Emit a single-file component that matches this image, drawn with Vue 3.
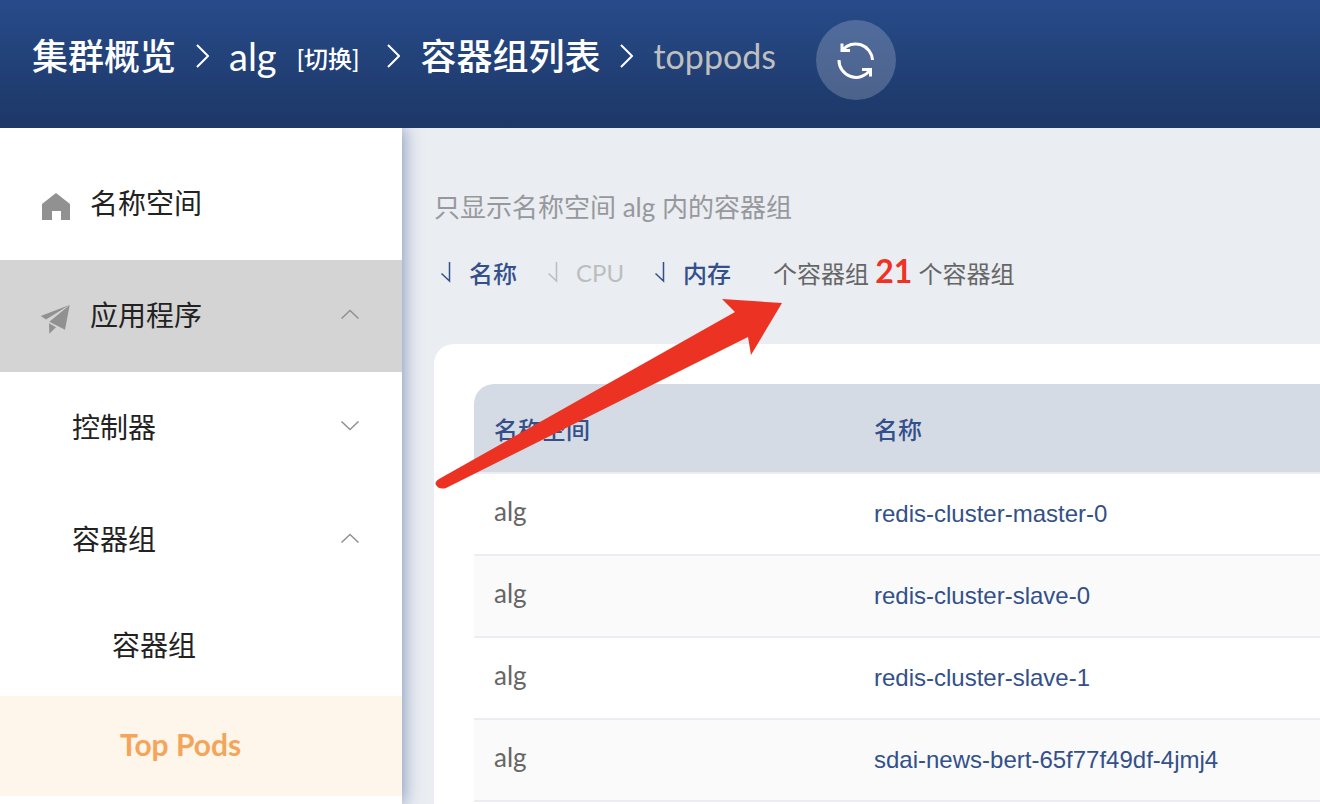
<script setup>
const crumbs = [
  { text: '集群概览', kind: 'link' },
  { text: 'alg', kind: 'namespace', action: '[切换]' },
  { text: '容器组列表', kind: 'link' },
  { text: 'toppods', kind: 'current' }
]

const menu = [
  { text: '名称空间', level: 'root', icon: 'home' },
  { text: '应用程序', level: 'root', icon: 'plane', arrow: 'up', open: true },
  { text: '控制器', level: 'group', arrow: 'down' },
  { text: '容器组', level: 'group', arrow: 'up' },
  { text: '容器组', level: 'leaf' },
  { text: 'Top Pods', level: 'leaf', selected: true }
]

const icons = {
  home: 'M16 11L30 22V38H21V29H12V38H2V22Z',
  plane: 'M29.5 11L.7 22L6 25.5ZM29.7 11L9.3 27.7L25 35.7ZM9 29.3L16 33.3L9.3 39.7Z'
}

const sorts = [
  { text: '名称', active: true },
  { text: 'CPU', active: false },
  { text: '内存', active: true }
]

const pods = [
  { namespace: 'alg', name: 'redis-cluster-master-0' },
  { namespace: 'alg', name: 'redis-cluster-slave-0' },
  { namespace: 'alg', name: 'redis-cluster-slave-1' },
  { namespace: 'alg', name: 'sdai-news-bert-65f77f49df-4jmj4' }
]
</script>

<template>
  <div class="page">
    <header class="topbar">
      <nav class="crumbs">
        <template v-for="(c, i) in crumbs" :key="c.text">
          <svg v-if="i" class="sep" width="13" height="24" viewBox="0 0 13 24" aria-hidden="true">
            <path d="M1 1L12 12L1 23" />
          </svg>
          <span v-if="c.kind === 'current'" class="current">{{ c.text }}</span>
          <a v-else href="#" :class="c.kind">{{ c.text }}</a>
          <button v-if="c.action" type="button" class="switch">{{ c.action }}</button>
        </template>
      </nav>
      <button type="button" class="refresh" aria-label="刷新">
        <svg width="40" height="40" viewBox="0 0 40 40" aria-hidden="true">
          <path d="M6 3.500V10.500H14M6.500 10A17 17 0 0 1 36.500 20" />
          <path d="M34.500 36.500V29.500H26M34 30A17 17 0 0 1 3 20" />
        </svg>
      </button>
    </header>

    <div class="body">
      <aside class="sidebar">
        <a
          v-for="(m, i) in menu"
          :key="i"
          href="#"
          class="item"
          :class="[m.level, { open: m.open, selected: m.selected }]"
        >
          <svg v-if="m.icon" class="icon" width="32" height="40" viewBox="0 0 32 40" aria-hidden="true">
            <path :d="icons[m.icon]" />
          </svg>
          <span class="label">{{ m.text }}</span>
          <svg v-if="m.arrow" class="caret" width="20" height="10" viewBox="0 0 20 10" aria-hidden="true">
            <path :d="m.arrow === 'up' ? 'M1.500 9.500L10 1.500L18.500 9.500' : 'M1.500 .5L10 8.500L18.500 .5'" />
          </svg>
        </a>
      </aside>

      <main class="main">
        <p class="hint">只显示名称空间 alg 内的容器组</p>
        <div class="toolbar">
          <button v-for="s in sorts" :key="s.text" type="button" class="sort" :class="{ active: s.active }">
            <svg width="12" height="24" viewBox="0 0 12 24" aria-hidden="true">
              <path d="M9.500 2V21L1.500 13.500" />
            </svg>
            {{ s.text }}
          </button>
          <p class="count">个容器组 <strong>21</strong> 个容器组</p>
        </div>

        <section class="card">
          <table class="pods">
            <thead>
              <tr>
                <th scope="col" class="ns">名称空间</th>
                <th scope="col">名称</th>
              </tr>
            </thead>
            <tbody>
              <tr v-for="p in pods" :key="p.name">
                <td class="ns">{{ p.namespace }}</td>
                <td class="name"><a href="#">{{ p.name }}</a></td>
              </tr>
            </tbody>
          </table>
        </section>

        <svg class="pointer" width="348" height="192" viewBox="0 0 348 192" aria-hidden="true">
          <path d="M348 5L288 1L301 14L5 181Q0 184 2 187Q5 192 12 190L314 39L317 57Z" />
        </svg>
      </main>
    </div>
  </div>
</template>

<style>
body {
  margin: 0;
}
</style>

<style scoped>
.page {
  display: flex;
  flex-direction: column;
  height: 100vh;
  overflow: hidden;
  font-family: Lato, "Noto Sans CJK SC", sans-serif;
  color: #222;
}

a {
  color: inherit;
  text-decoration: none;
}

button {
  padding: 0;
  border: 0;
  background: none;
  font: inherit;
  color: inherit;
  cursor: pointer;
}

p {
  margin: 0;
}

.topbar {
  position: relative;
  z-index: 2;
  display: flex;
  flex-shrink: 0;
  align-items: flex-start;
  gap: 40px;
  box-sizing: border-box;
  height: 128px;
  padding: 20px 32px;
  background: linear-gradient(#274b8a, #1d3766);
  color: #fff;
}

.crumbs {
  display: flex;
  align-items: center;
  gap: 20px;
  height: 72px;
  font-size: 36px;
  line-height: 72px;
}

.link {
  font-weight: 500;
}

.namespace {
  font-size: 38px;
}

.current {
  color: #bfbfbf;
  font-size: 34px;
}

.switch {
  margin-right: 8px;
  padding-top: 6px;
  font-size: 24px;
  font-weight: 500;
}

.sep {
  fill: none;
  stroke: #fff;
  stroke-width: 2;
}

.refresh {
  display: flex;
  align-items: center;
  justify-content: center;
  width: 80px;
  height: 80px;
  border-radius: 50%;
  background: rgba(255, 255, 255, 0.2);
}

.refresh svg {
  fill: none;
  stroke: #fff;
  stroke-width: 3;
}

.body {
  display: flex;
  flex: 1;
  min-height: 0;
}

.sidebar {
  position: relative;
  z-index: 1;
  flex: 0 0 402px;
  box-sizing: border-box;
  padding-top: 20px;
  background: #fff;
  box-shadow: 2px 0 16px rgba(38, 72, 135, 0.5);
}

.item {
  display: flex;
  align-items: center;
  box-sizing: border-box;
  height: 112px;
  padding: 0 42px 4px 72px;
  font-size: 28px;
}

.root {
  gap: 18px;
  padding-left: 40px;
}

.leaf {
  height: 100px;
  padding-left: 112px;
}

.open {
  background: #d4d4d4;
}

.selected {
  padding-left: 120px;
  background: #fef5eb;
  color: #f5a55a;
  font-size: 30px;
  font-weight: 700;
}

.icon {
  fill: #919191;
}

.caret {
  margin-left: auto;
  fill: none;
  stroke: #919191;
  stroke-width: 1.5;
}

.main {
  position: relative;
  display: flex;
  flex: 1;
  flex-direction: column;
  min-width: 0;
  padding: 59px 0 0 32px;
  background: #eaedf2;
}

.hint {
  color: #97989b;
  font-size: 26px;
  line-height: 40px;
}

.toolbar {
  display: flex;
  align-items: center;
  gap: 30px;
  height: 48px;
  margin: 21px 0 48px;
  padding-left: 6px;
  font-size: 24px;
}

.sort {
  display: flex;
  align-items: center;
  gap: 17px;
  color: #bdbdbd;
}

.sort svg {
  fill: none;
  stroke: currentColor;
  stroke-width: 1.5;
}

.sort.active {
  color: #33508a;
  font-weight: 500;
}

.count {
  margin-left: 12px;
  padding-bottom: 4px;
  color: #666;
}

.count strong {
  color: #ee3224;
  font-size: 32px;
  font-weight: 700;
}

.card {
  flex: 1;
  min-height: 0;
  padding: 40px 0 0 40px;
  border-radius: 20px 0 0 0;
  background: #fff;
}

.pods {
  width: 100%;
  border-collapse: separate;
  border-spacing: 0;
  table-layout: fixed;
  font-size: 24px;
}

.pods th,
.pods td {
  box-sizing: border-box;
  height: 82px;
  padding: 0 20px;
  border-bottom: 2px solid #ebedf3;
  text-align: left;
}

.pods th {
  height: 90px;
  background: #d5dbe5;
  color: #33508a;
  font-weight: 500;
}

.pods th:first-child {
  border-top-left-radius: 20px;
}

.pods th.ns {
  width: 380px;
}

.pods td.ns {
  padding-bottom: 6px;
  color: #666;
  font-size: 26px;
}

.pods td.name {
  padding-bottom: 2px;
}

.pods td a {
  color: #33508a;
  font-family: "Liberation Sans", Arial, sans-serif;
}

.pods tbody tr:nth-child(even) {
  background: #fafafa;
}

.pointer {
  position: absolute;
  top: 170px;
  left: 32px;
  fill: #ec3323;
  pointer-events: none;
}
</style>
